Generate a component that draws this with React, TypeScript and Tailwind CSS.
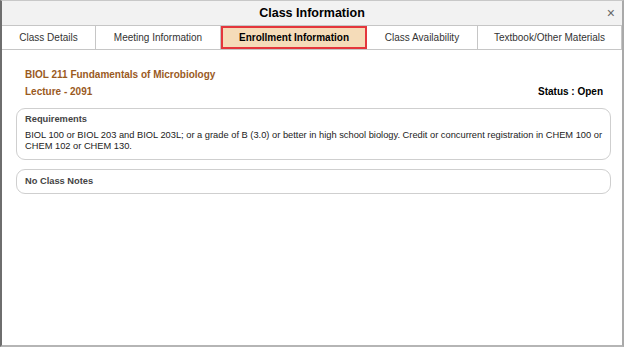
import React from 'react';

const TABS = [
  { label: 'Class Details', w: 'w-[94px]' },
  { label: 'Meeting Information', w: 'w-[125px]' },
  { label: 'Enrollment Information', w: 'w-[146px]', active: true },
  { label: 'Class Availability', w: 'w-[111px]' },
  { label: 'Textbook/Other Materials', w: 'flex-1' },
];

export default function App() {
  return (
    <div className="w-[624px] h-[347px] bg-white font-['Liberation_Sans',Arial,sans-serif] text-[#333]">
      <div className="h-full flex flex-col border-l-2 border-l-[#6e6e6e] border-r-2 border-r-[#a9a9a9] border-b-2 border-b-[#b5b5b5] border-t border-t-[#c8c8c8]">
        {/* header */}
        <div className="h-[24px] bg-[#f2f2f2] flex items-center justify-center relative">
          <span className="text-[12.5px] font-bold text-black">Class Information</span>
          <span className="absolute right-[7px] top-[5px] text-[14px] leading-none font-light text-[#666]">×</span>
        </div>

        {/* tabs */}
        <div className="h-[25px] flex border-t border-b border-[#c6c6c6] bg-white">
          {TABS.map(t => (
            <div
              key={t.label}
              className={
                t.w + ' flex items-center justify-center text-[10px] ' +
                (t.active
                  ? 'bg-[#f5dcb9] border-2 border-[#e4363c] font-bold text-black'
                  : 'border-r border-[#c6c6c6] text-[#333]')
              }
            >
              {t.label}
            </div>
          ))}
        </div>

        {/* content */}
        <div className="pl-[14px] pr-[11px] pt-[16px]">
          <div className="pl-[9px] text-[10px] font-bold text-[#9a5a1e] leading-[17px]">BIOL 211 Fundamentals of Microbiology</div>
          <div className="pl-[9px] flex justify-between items-center text-[10px] font-bold leading-[17px]">
            <span className="text-[#9a5a1e]">Lecture - 2091</span>
            <span className="text-black pr-[8px]">Status : Open</span>
          </div>

          <div className="mt-[8px] border border-[#cfcfcf] rounded-[9px] pl-[8px] pr-[4px] pt-[3px] pb-[7px]">
            <div className="text-[9.3px] font-bold text-[#444] leading-[14px]">Requirements</div>
            <div className="mt-[4px] text-[9.3px] leading-[11px] text-[#222]">
              BIOL 100 or BIOL 203 and BIOL 203L; or a grade of B (3.0) or better in high school biology. Credit or concurrent registration in CHEM 100 or CHEM 102 or CHEM 130.
            </div>
          </div>

          <div className="mt-[9px] border border-[#cfcfcf] rounded-[9px] px-[8px] h-[25px] flex items-center">
            <span className="text-[9.3px] font-bold text-[#444]">No Class Notes</span>
          </div>
        </div>
      </div>
    </div>
  );
}
